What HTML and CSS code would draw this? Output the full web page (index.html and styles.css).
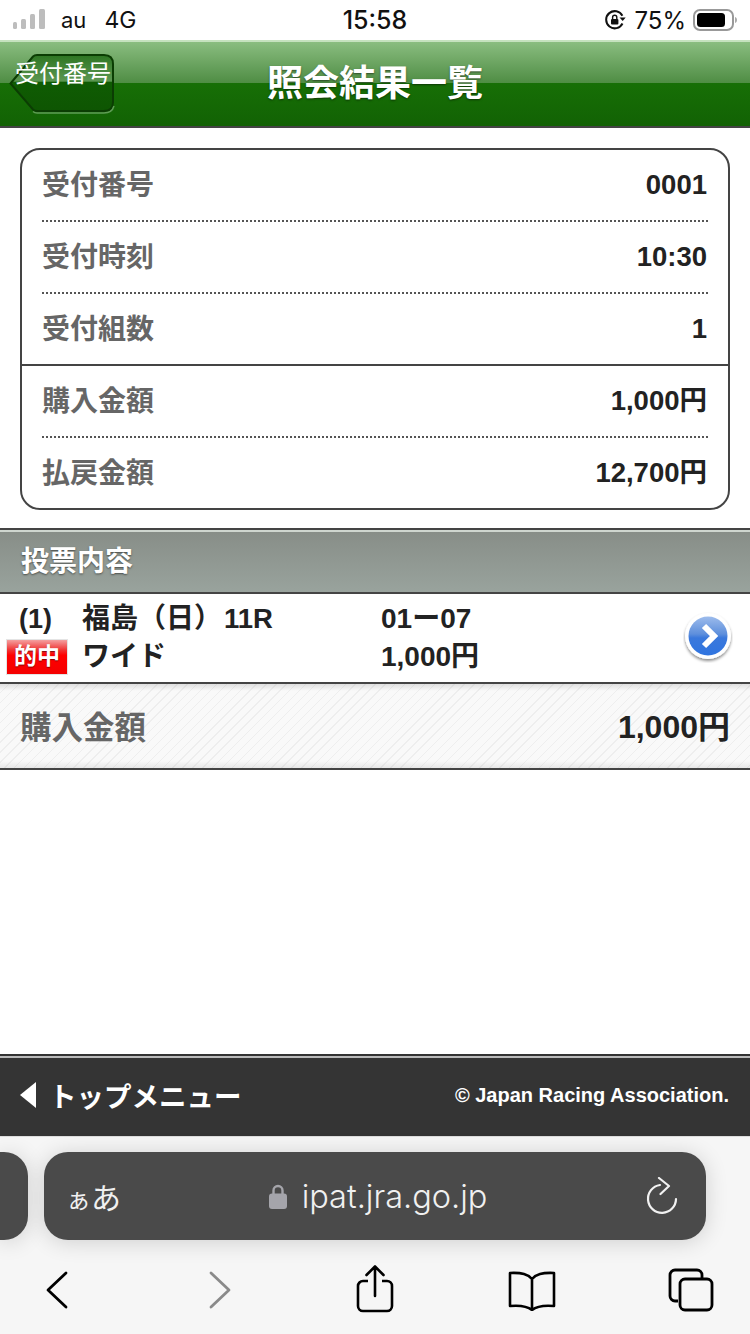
FILE: index.html
```html
<!DOCTYPE html>
<html lang="ja">

<head>
    <meta charset="UTF-8">
    <meta name="viewport" content="width=device-width, initial-scale=1.0">
    <title>照会結果一覧</title>
    <link rel="stylesheet" href="styles.css">
</head>

<body>

    <div class="status-bar">
        <div class="status-left">
            <svg class="signal" width="32" height="24" viewBox="0 0 32 24">
                <rect x="0" y="14" width="4" height="7" rx="1.5" />
                <rect x="8" y="11" width="5" height="10" rx="1.5" />
                <rect x="17" y="6" width="5" height="15" rx="1.5" />
                <rect x="26" y="1" width="6" height="20" rx="1.5" />
            </svg>
            <span class="carrier">au</span>
            <span class="network">4G</span>
        </div>
        <div class="status-time">15:58</div>
        <div class="status-right">
            <svg class="rotation" width="22" height="22" viewBox="0 0 22 22">
                <path d="M18.5 14.5A8.6 8.6 0 1 1 18.4 6.8" fill="none" stroke="#111" stroke-width="2" />
                <path d="M15.5 8.5h6.2l-3 3.6z" fill="#111" />
                <rect x="7" y="10" width="7.4" height="5.6" rx="1" fill="#111" />
                <path d="M8.6 10V8.4a2.1 2.1 0 0 1 4.2 0V10" fill="none" stroke="#111" stroke-width="1.4" />
            </svg>
            <span class="battery-text">75%</span>
            <svg class="battery" width="44" height="24" viewBox="0 0 44 24">
                <rect x="1" y="2" width="39" height="20" rx="6" fill="none" stroke="#999" stroke-width="2" />
                <rect x="4" y="5" width="28" height="14" rx="3.5" fill="#000" />
                <path d="M42 9c1.500.5 2 1.600 2 3s-.5 2.500-2 3z" fill="#aaa" />
            </svg>
        </div>
    </div>

    <header class="app-header">
        <a class="back-btn">
            <svg class="back-shape" width="106" height="60" viewBox="0 0 106 60">
                <defs>
                    <linearGradient id="backFill" x1="0" y1="0" x2="0" y2="1">
                        <stop offset="0" stop-color="#2d7522" />
                        <stop offset="0.47" stop-color="#5c9752" />
                        <stop offset="0.48" stop-color="#0f5c03" />
                        <stop offset="1" stop-color="#0e5502" />
                    </linearGradient>
                </defs>
                <path d="M1.500 29.500 24 2.500Q25.500 1 28 1H95Q104 1 104 10V48Q104 57 95 57H28Q25.500 57 24 55.500Z" fill="url(#backFill)" stroke="#0b3d03" stroke-width="2" />
                <path d="M24 57.500Q25.500 59 28 59H95Q103 59 105 52" fill="none" stroke="#5f9c55" stroke-width="1.500" />
            </svg>
            <span class="back-label">受付番号</span>
        </a>
        <h1 class="app-title">照会結果一覧</h1>
    </header>

    <main class="content">
        <section class="summary-card">
            <div class="summary-group">
                <div class="summary-row"><span class="summary-label">受付番号</span><span class="summary-value">0001</span></div>
                <div class="summary-row"><span class="summary-label">受付時刻</span><span class="summary-value">10:30</span></div>
                <div class="summary-row"><span class="summary-label">受付組数</span><span class="summary-value">1</span></div>
            </div>
            <div class="summary-group">
                <div class="summary-row"><span class="summary-label">購入金額</span><span class="summary-value">1,000円</span></div>
                <div class="summary-row"><span class="summary-label">払戻金額</span><span class="summary-value">12,700円</span></div>
            </div>
        </section>

        <h2 class="section-head">投票内容</h2>

        <div class="vote-row">
            <div class="vote-grid">
                <span class="vote-num">(1)</span>
                <span class="vote-race">福島（日）<span class="race-no">11R</span></span>
                <span class="vote-combo">01ー07</span>
                <span class="hit-badge">的中</span>
                <span class="vote-type">ワイド</span>
                <span class="vote-amount">1,000円</span>
            </div>
            <svg class="go-icon" width="50" height="52" viewBox="0 0 50 52">
                <defs>
                    <linearGradient id="goFill" x1="0" y1="0" x2="0" y2="1">
                        <stop offset="0" stop-color="#9dbcec" />
                        <stop offset="0.45" stop-color="#5e8fdc" />
                        <stop offset="0.55" stop-color="#3a78dc" />
                        <stop offset="1" stop-color="#2f74e0" />
                    </linearGradient>
                    <filter id="goShadow" x="-20%" y="-20%" width="140%" height="140%">
                        <feDropShadow dx="0" dy="2" stdDeviation="1.500" flood-color="#000" flood-opacity="0.45" />
                    </filter>
                </defs>
                <circle cx="25" cy="25" r="23" fill="#fff" filter="url(#goShadow)" />
                <circle cx="25" cy="25" r="19.500" fill="url(#goFill)" />
                <path d="M21 15l10 10-10 10" fill="none" stroke="#fff" stroke-width="6" />
            </svg>
        </div>

        <div class="total-row">
            <span class="total-label">購入金額</span>
            <span class="total-value">1,000円</span>
        </div>
    </main>

    <footer class="app-footer">
        <a class="top-link"><span class="top-arrow"></span>トップメニュー</a>
        <span class="copyright">© Japan Racing Association.</span>
    </footer>

    <div class="browser-bar">
        <div class="tab-strip">
            <div class="tab-stub"></div>
            <div class="url-pill">
                <span class="reader-btn"><span class="reader-small">ぁ</span>あ</span>
                <span class="url-text">
                    <svg class="lock" width="18" height="26" viewBox="0 0 18 26">
                        <path d="M4.500 12V7.500a4.500 4.500 0 0 1 9 0V12" fill="none" stroke="#a5a5ab" stroke-width="2.400" />
                        <rect x="0" y="10.500" width="18" height="15.500" rx="3" fill="#a5a5ab" />
                    </svg>
                    ipat.jra.go.jp
                </span>
                <svg class="reload" width="32" height="38" viewBox="0 0 32 38">
                    <path d="M14 8A14 14 0 1 0 30 22" fill="none" stroke="#f2f2f2" stroke-width="2.200" stroke-linecap="round" />
                    <path d="M13 1l10 8-8.500 8" fill="none" stroke="#f2f2f2" stroke-width="2.200" stroke-linecap="round" stroke-linejoin="round" />
                </svg>
            </div>
        </div>
        <nav class="toolbar">
            <svg class="tool tool-back" width="22" height="38" viewBox="0 0 22 38">
                <path d="M20 2 2 19l18 17" fill="none" stroke="#000" stroke-width="2.800" stroke-linecap="round" stroke-linejoin="round" />
            </svg>
            <svg class="tool tool-forward" width="22" height="38" viewBox="0 0 22 38">
                <path d="M2 2l18 17L2 36" fill="none" stroke="#8a8a8a" stroke-width="2.800" stroke-linecap="round" stroke-linejoin="round" />
            </svg>
            <svg class="tool tool-share" width="38" height="48" viewBox="0 0 38 48">
                <path d="M12 16H7a5 5 0 0 0-5 5v20a5 5 0 0 0 5 5h24a5 5 0 0 0 5-5V21a5 5 0 0 0-5-5h-5" fill="none" stroke="#000" stroke-width="2.600" />
                <path d="M19 31V2M10.500 10 19 1.500 27.500 10" fill="none" stroke="#000" stroke-width="2.600" stroke-linecap="round" stroke-linejoin="round" />
            </svg>
            <svg class="tool tool-book" width="48" height="40" viewBox="0 0 48 40">
                <path d="M24 8C20 3 14 1.500 2 2v33c11-1 17 0 22 4 5-4 11-5 22-4V2C34 1.500 28 3 24 8zM24 8v31" fill="none" stroke="#000" stroke-width="2.600" stroke-linejoin="round" />
            </svg>
            <svg class="tool tool-tabs" width="46" height="44" viewBox="0 0 46 44">
                <path d="M10 33H7a5 5 0 0 1-5-5V7a5 5 0 0 1 5-5h22a5 5 0 0 1 5 5v3" fill="none" stroke="#000" stroke-width="2.800" />
                <rect x="12" y="11" width="32" height="31" rx="5" fill="none" stroke="#000" stroke-width="2.800" />
            </svg>
        </nav>
    </div>

</body>

</html>
```

FILE: styles.css
```css
* {
    box-sizing: border-box;
}

html,
body {
    margin: 0;
    padding: 0;
}

body {
    width: 750px;
    height: 1334px;
    display: flex;
    flex-direction: column;
    overflow: hidden;
    background-color: #fff;
    color: #222;
    font-family: "Liberation Sans", "Noto Sans CJK JP", sans-serif;
    font-weight: bold;
}

/* status bar */
.status-bar {
    height: 40px;
    display: grid;
    grid-template-columns: 1fr auto 1fr;
    align-items: center;
    padding: 0 13px;
    font-family: Inter, "Liberation Sans", sans-serif;
    font-weight: normal;
    color: #111;
}

.status-left {
    display: flex;
    align-items: center;
    font-size: 22px;
}

.signal {
    fill: #bdbdbd;
    margin-right: 16px;
}

.network {
    margin-left: 18px;
    font-size: 23px;
}

.status-time {
    font-size: 25px;
    font-weight: 500;
}

.status-right {
    display: flex;
    align-items: center;
    justify-content: flex-end;
    font-size: 24px;
}

.rotation {
    margin-right: 8px;
}

.battery {
    margin-left: 7px;
}

/* header */
.app-header {
    height: 88px;
    display: grid;
    grid-template-columns: 1fr auto 1fr;
    align-items: center;
    padding: 0 9px;
    border-top: 2px solid #c6e2bf;
    border-bottom: 2px solid #444;
    background: linear-gradient(#8abd80 0, #4f8d44 41px, #176f06 41px, #126204 100%);
}

.back-btn {
    grid-column: 1;
    position: relative;
    width: 106px;
    height: 60px;
    margin-top: -1px;
}

.back-shape {
    display: block;
}

.back-label {
    position: absolute;
    left: 6px;
    top: 2px;
    color: #fff;
    font-family: "Noto Sans CJK JP", sans-serif;
    font-size: 24px;
    font-weight: normal;
    line-height: 32px;
    white-space: nowrap;
}

.app-title {
    grid-column: 2;
    margin: 0 0 9px;
    color: #fff;
    font-family: "Noto Sans CJK JP", sans-serif;
    font-size: 36px;
    font-weight: bold;
    line-height: 44px;
    text-shadow: 0 1px 2px rgba(0, 0, 0, 0.5);
}

/* main */
.content {
    flex: 1;
    padding-top: 20px;
}

.summary-card {
    margin: 0 20px 18px;
    border: 2px solid #444;
    border-radius: 20px;
}

.summary-group {
    border-bottom: 2px solid #444;
}

.summary-group:last-child {
    border-bottom: none;
}

.summary-row {
    display: flex;
    justify-content: space-between;
    align-items: center;
    height: 72px;
    margin: 0 20px;
    padding-bottom: 2px;
    border-bottom: 2px dotted #555;
}

.summary-group .summary-row:last-child {
    height: 70px;
    border-bottom: none;
}

.summary-label {
    color: #666;
    font-size: 28px;
    margin-bottom: 3px;
}

.summary-value {
    color: #222;
    font-size: 27.500px;
    line-height: 32px;
    margin: 2px 1px 0 0;
}

.section-head {
    height: 66px;
    margin: 0;
    padding-left: 21px;
    border-top: 2px solid #444;
    border-bottom: 2px solid #444;
    box-shadow: inset 0 2px 0 #cfd6cf;
    background: linear-gradient(#878d87, #99a39d);
    color: #fff;
    font-size: 28px;
    line-height: 64px;
    text-shadow: 0 1px 2px rgba(0, 0, 0, 0.5);
}

.vote-row {
    height: 90px;
    display: flex;
    align-items: center;
    justify-content: space-between;
    padding: 0 17px 0 7px;
    border-bottom: 2px solid #444;
}

.vote-grid {
    display: grid;
    grid-template-columns: 75px 299px 200px;
    grid-auto-rows: 38px;
    align-items: center;
    font-size: 28px;
    line-height: 34px;
    margin-top: -1px;
}

.vote-num {
    padding-left: 12px;
    font-size: 27px;
}

.vote-race,
.vote-type {
    font-size: 28px;
}

.race-no {
    margin-left: 2px;
    font-size: 27.500px;
}

.hit-badge {
    width: 60px;
    height: 34px;
    margin-top: 0;
    box-shadow: 0 0 0 1px #e4e4e4;
    background: linear-gradient(#f4a0a0 0, #f03030 30%, #ff0000 45%, #f40000 100%);
    color: #fff;
    font-size: 23px;
    line-height: 33px;
    text-align: center;
    text-shadow: 0 1px 1px rgba(90, 0, 0, 0.7);
}

.go-icon {
    margin-top: -3px;
}

.total-row {
    height: 86px;
    display: flex;
    align-items: center;
    justify-content: space-between;
    padding: 0 20px 2px 20px;
    border-bottom: 2px solid #444;
    background:
        linear-gradient(rgba(0, 0, 0, 0.1), transparent 7px, transparent calc(100% - 7px), rgba(0, 0, 0, 0.07)),
        repeating-linear-gradient(135deg, #f9f9f9 0, #f9f9f9 6px, #eeeeee 6px, #eeeeee 7px);
}

.total-label {
    color: #666;
    font-size: 31.500px;
}

.total-value {
    color: #222;
    font-size: 32px;
    line-height: 38px;
    margin-top: 3px;
}

/* footer */
.app-footer {
    height: 83px;
    display: flex;
    align-items: center;
    justify-content: space-between;
    padding: 0 21px 2px 20px;
    border-top: 2px solid #333;
    box-shadow: inset 0 2px 0 #bbb;
    background-color: #343434;
    color: #fff;
    border-bottom: 1px solid #ddd;
}

.top-link {
    display: flex;
    align-items: center;
    font-family: "Noto Sans CJK JP", sans-serif;
    font-size: 27.500px;
}

.top-arrow {
    width: 0;
    height: 0;
    margin-right: 13px;
    border-top: 13px solid transparent;
    border-bottom: 13px solid transparent;
    border-right: 16px solid #fff;
}

.copyright {
    font-size: 20px;
}

/* safari bars */
.browser-bar {
    height: 197px;
    background-color: #f6f6f6;
    font-family: Inter, "Noto Sans CJK JP", sans-serif;
    font-weight: normal;
}

.tab-strip {
    display: flex;
    gap: 16px;
    padding-top: 15px;
}

.tab-stub {
    width: 28px;
    height: 88px;
    border-radius: 0 24px 24px 0;
    background-color: #4a4a4a;
    box-shadow: 0 2px 22px rgba(0, 0, 0, 0.16);
}

.url-pill {
    width: 662px;
    height: 88px;
    display: flex;
    align-items: center;
    justify-content: space-between;
    padding: 0 28px 0 22px;
    border-radius: 24px;
    background-color: #4a4a4a;
    box-shadow: 0 2px 22px rgba(0, 0, 0, 0.16);
    color: #f0f0f0;
}

.reader-btn {
    width: 56px;
    font-family: "Noto Sans CJK JP", sans-serif;
    font-size: 30px;
    white-space: nowrap;
}

.reader-small {
    font-size: 25px;
}

.url-text {
    display: flex;
    align-items: center;
    gap: 15px;
    margin-right: 12px;
    font-size: 32.500px;
    font-weight: 300;
}

.toolbar {
    display: flex;
    align-items: flex-start;
}

.tool {
    flex: none;
}

.tool-back {
    margin: 31px 0 0 46px;
}

.tool-forward {
    margin: 31px 0 0 141px;
}

.tool-share {
    margin: 25px 0 0 125px;
}

.tool-book {
    margin: 31px 0 0 114px;
}

.tool-tabs {
    margin: 28px 0 0 112px;
}
```
